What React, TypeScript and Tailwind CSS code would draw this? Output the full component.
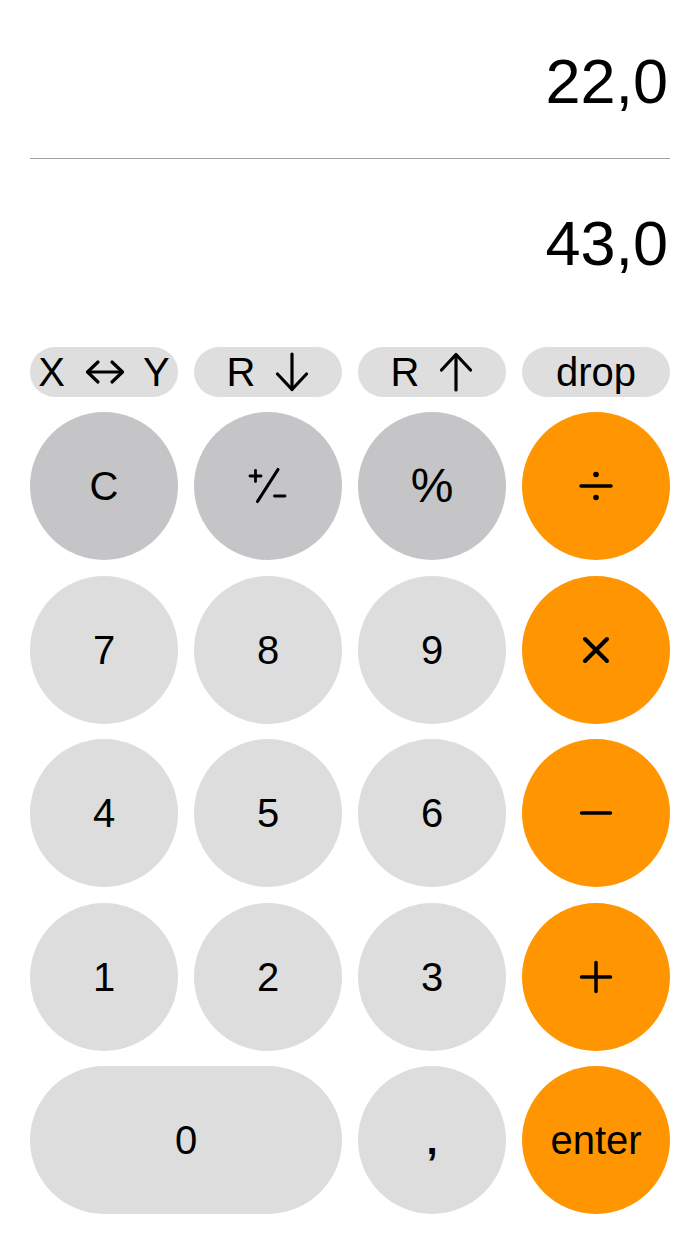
import React from "react";

const font = { fontFamily: '"Liberation Sans", Arial, sans-serif' };

function Div() {
  return (
    <svg width="40" height="40" viewBox="0 0 40 40">
      <line x1="5" y1="20" x2="35" y2="20" stroke="black" strokeWidth="3.5" strokeLinecap="round" />
      <circle cx="20" cy="8.5" r="2.8" fill="black" />
      <circle cx="20" cy="31.5" r="2.8" fill="black" />
    </svg>
  );
}
function Mul() {
  return (
    <svg width="40" height="40" viewBox="0 0 40 40">
      <line x1="9" y1="9" x2="31" y2="31" stroke="black" strokeWidth="4" strokeLinecap="round" />
      <line x1="31" y1="9" x2="9" y2="31" stroke="black" strokeWidth="4" strokeLinecap="round" />
    </svg>
  );
}
function Minus() {
  return (
    <svg width="40" height="40" viewBox="0 0 40 40">
      <line x1="5.5" y1="20" x2="34.5" y2="20" stroke="black" strokeWidth="3.5" strokeLinecap="round" />
    </svg>
  );
}
function Plus() {
  return (
    <svg width="40" height="40" viewBox="0 0 40 40">
      <line x1="5.5" y1="20" x2="34.5" y2="20" stroke="black" strokeWidth="3.5" strokeLinecap="round" />
      <line x1="20" y1="5.5" x2="20" y2="34.5" stroke="black" strokeWidth="3.5" strokeLinecap="round" />
    </svg>
  );
}
function PlusMinus() {
  return (
    <svg width="40" height="40" viewBox="0 0 40 40">
      <line x1="2" y1="10" x2="13" y2="10" stroke="black" strokeWidth="2.8" strokeLinecap="round" />
      <line x1="7.5" y1="4.5" x2="7.5" y2="15.5" stroke="black" strokeWidth="2.8" strokeLinecap="round" />
      <line x1="30" y1="3.5" x2="9.5" y2="35.5" stroke="black" strokeWidth="3.2" strokeLinecap="round" />
      <line x1="26.5" y1="30" x2="37" y2="30" stroke="black" strokeWidth="2.8" strokeLinecap="round" />
    </svg>
  );
}
function ArrowLR() {
  return (
    <svg width="40" height="26" viewBox="0 0 40 26">
      <line x1="3" y1="13" x2="37" y2="13" stroke="black" strokeWidth="3.2" strokeLinecap="round" />
      <polyline points="13,3 2.5,13 13,23" fill="none" stroke="black" strokeWidth="3.2" strokeLinecap="round" strokeLinejoin="round" />
      <polyline points="27,3 37.5,13 27,23" fill="none" stroke="black" strokeWidth="3.2" strokeLinecap="round" strokeLinejoin="round" />
    </svg>
  );
}
function ArrowDown() {
  return (
    <svg width="34" height="40" viewBox="0 0 34 40">
      <line x1="17" y1="2" x2="17" y2="37" stroke="black" strokeWidth="3.2" strokeLinecap="round" />
      <polyline points="2.5,22 17,37.5 31.5,22" fill="none" stroke="black" strokeWidth="3.2" strokeLinecap="round" strokeLinejoin="round" />
    </svg>
  );
}
function ArrowUp() {
  return (
    <svg width="34" height="40" viewBox="0 0 34 40">
      <line x1="17" y1="3" x2="17" y2="38" stroke="black" strokeWidth="3.2" strokeLinecap="round" />
      <polyline points="2.5,18 17,2.5 31.5,18" fill="none" stroke="black" strokeWidth="3.2" strokeLinecap="round" strokeLinejoin="round" />
    </svg>
  );
}

function Key({ children, color, wide }: { children: React.ReactNode; color: string; wide?: boolean }) {
  return (
    <div
      className={`${wide ? "col-span-2" : ""} h-[148px] rounded-full flex items-center justify-center text-[40px] leading-none text-black ${color}`}
    >
      {children}
    </div>
  );
}

export default function App() {
  const light = "bg-[#dddddd]";
  const dark = "bg-[#c5c5c7]";
  const orange = "bg-[#ff9500]";
  return (
    <div className="w-[700px] h-[1244px] bg-white px-[30px] overflow-hidden" style={font}>
      <div className="pt-[50px] flex flex-col">
        <div className="h-[63px] text-[63px] leading-none text-right pr-[2px] text-black">22,0</div>
        <div className="mt-[45px] h-px bg-[#a0a0a0]" />
        <div className="mt-[53px] h-[63px] text-[63px] leading-none text-right pr-[2px] text-black">43,0</div>
      </div>
      <div className="mt-[72px] grid grid-cols-4 gap-x-4">
        <div className="h-[50px] rounded-full bg-[#dedede] flex items-center justify-center text-[40px] leading-none">
          <span>X</span>
          <span className="ml-[20px] mr-[18px] flex"><ArrowLR /></span>
          <span>Y</span>
        </div>
        <div className="h-[50px] rounded-full bg-[#dedede] flex items-center justify-center text-[40px] leading-none">
          <span>R</span>
          <span className="ml-[20px] flex"><ArrowDown /></span>
        </div>
        <div className="h-[50px] rounded-full bg-[#dedede] flex items-center justify-center text-[40px] leading-none">
          <span>R</span>
          <span className="ml-[20px] flex"><ArrowUp /></span>
        </div>
        <div className="h-[50px] rounded-full bg-[#dedede] flex items-center justify-center text-[40px] leading-none">
          <span>drop</span>
        </div>
      </div>
      <div className="mt-[15px] grid grid-cols-4 gap-x-4 gap-y-[15.5px]">
        <Key color={dark}>C</Key>
        <Key color={dark}><PlusMinus /></Key>
        <Key color={dark}><span className="text-[48px]">%</span></Key>
        <Key color={orange}><Div /></Key>
        <Key color={light}>7</Key>
        <Key color={light}>8</Key>
        <Key color={light}>9</Key>
        <Key color={orange}><Mul /></Key>
        <Key color={light}>4</Key>
        <Key color={light}>5</Key>
        <Key color={light}>6</Key>
        <Key color={orange}><Minus /></Key>
        <Key color={light}>1</Key>
        <Key color={light}>2</Key>
        <Key color={light}>3</Key>
        <Key color={orange}><Plus /></Key>
        <Key color={light} wide>0</Key>
        <Key color={light}><span className="font-bold">,</span></Key>
        <Key color={orange}>enter</Key>
      </div>
    </div>
  );
}
